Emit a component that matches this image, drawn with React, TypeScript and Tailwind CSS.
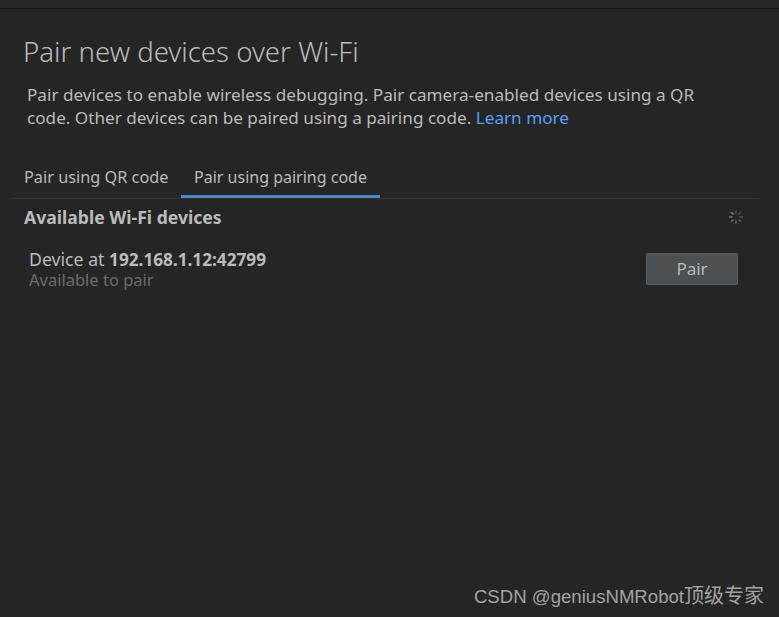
export default function App() {
  return (
    <div className="relative flex h-[617px] w-[779px] flex-col overflow-hidden bg-[#252525] font-['Noto_Sans',sans-serif] text-[#bbbbbb]">
      <div className="h-[9px] shrink-0 border-b border-[#191919] bg-[#272727]" />

      <div className="flex flex-col pl-[11px] pr-5">
        <h1 className="ml-3 mt-[24px] text-[27.6px] font-light leading-[36px]">Pair new devices over Wi-Fi</h1>
        <p className="ml-4 mt-[14px] w-[720px] text-[17.15px] leading-[23px]">
          Pair devices to enable wireless debugging. Pair camera-enabled devices using a QR
          <br />
          code. Other devices can be paired using a pairing code.{' '}
          <span className="text-[#589df6]">Learn more</span>
        </p>

        <div className="mt-[29px] flex h-[41px] items-stretch border-b border-[#323232] text-[16px]">
          <div className="flex w-[170px] items-center pb-[1px] pl-[13px] text-[16.3px]">Pair using QR code</div>
          <div className="flex w-[199px] items-center justify-center border-b-[3px] border-[#4a88c7] pt-[1px]">
            Pair using pairing code
          </div>
        </div>

        <div className="mt-[4px] flex h-[28px] items-center justify-between pl-[13px] pr-[15px]">
          <span className="text-[17.6px] font-bold">Available Wi-Fi devices</span>
          <svg width="16" height="16" viewBox="0 0 16 16" stroke="#5c5c5c" strokeWidth="1.6">
            <path d="M8 1v3.4" stroke="#4a4a4a" />
            <path d="M12.9 3.1 10.5 5.5" stroke="#4f4f4f" />
            <path d="M15 8h-3.4" stroke="#555555" />
            <path d="M12.9 12.9 10.5 10.5" stroke="#5a5a5a" />
            <path d="M8 15v-3.4" stroke="#606060" />
            <path d="M3.1 12.9 5.5 10.5" stroke="#686868" />
            <path d="M1 8h3.4" stroke="#707070" />
            <path d="M3.1 3.1 5.5 5.5" stroke="#7a7a7a" />
          </svg>
        </div>

        <div className="mt-[17px] flex items-center justify-between pl-[18px] pr-[21px]">
          <div className="flex flex-col">
            <span className="text-[17.7px] leading-[23px]">
              Device at <span className="text-[17.2px] font-bold">192.168.1.12:42799</span>
            </span>
            <span className="text-[16.5px] leading-[18px] text-[#6c6c6c]">Available to pair</span>
          </div>
          <button className="h-8 w-[92px] rounded-[2px] border border-[#5e6060] bg-[#4c5052] text-[17px]">
            Pair
          </button>
        </div>
      </div>

      <span className="absolute bottom-[8px] right-[15px] font-['Liberation_Sans','Noto_Sans_CJK_SC',sans-serif] text-[18.6px] leading-[24px] text-[#a3a3a3]">
        CSDN @geniusNMRobot<span className="text-[20px]">顶级专家</span>
      </span>
    </div>
  )
}
